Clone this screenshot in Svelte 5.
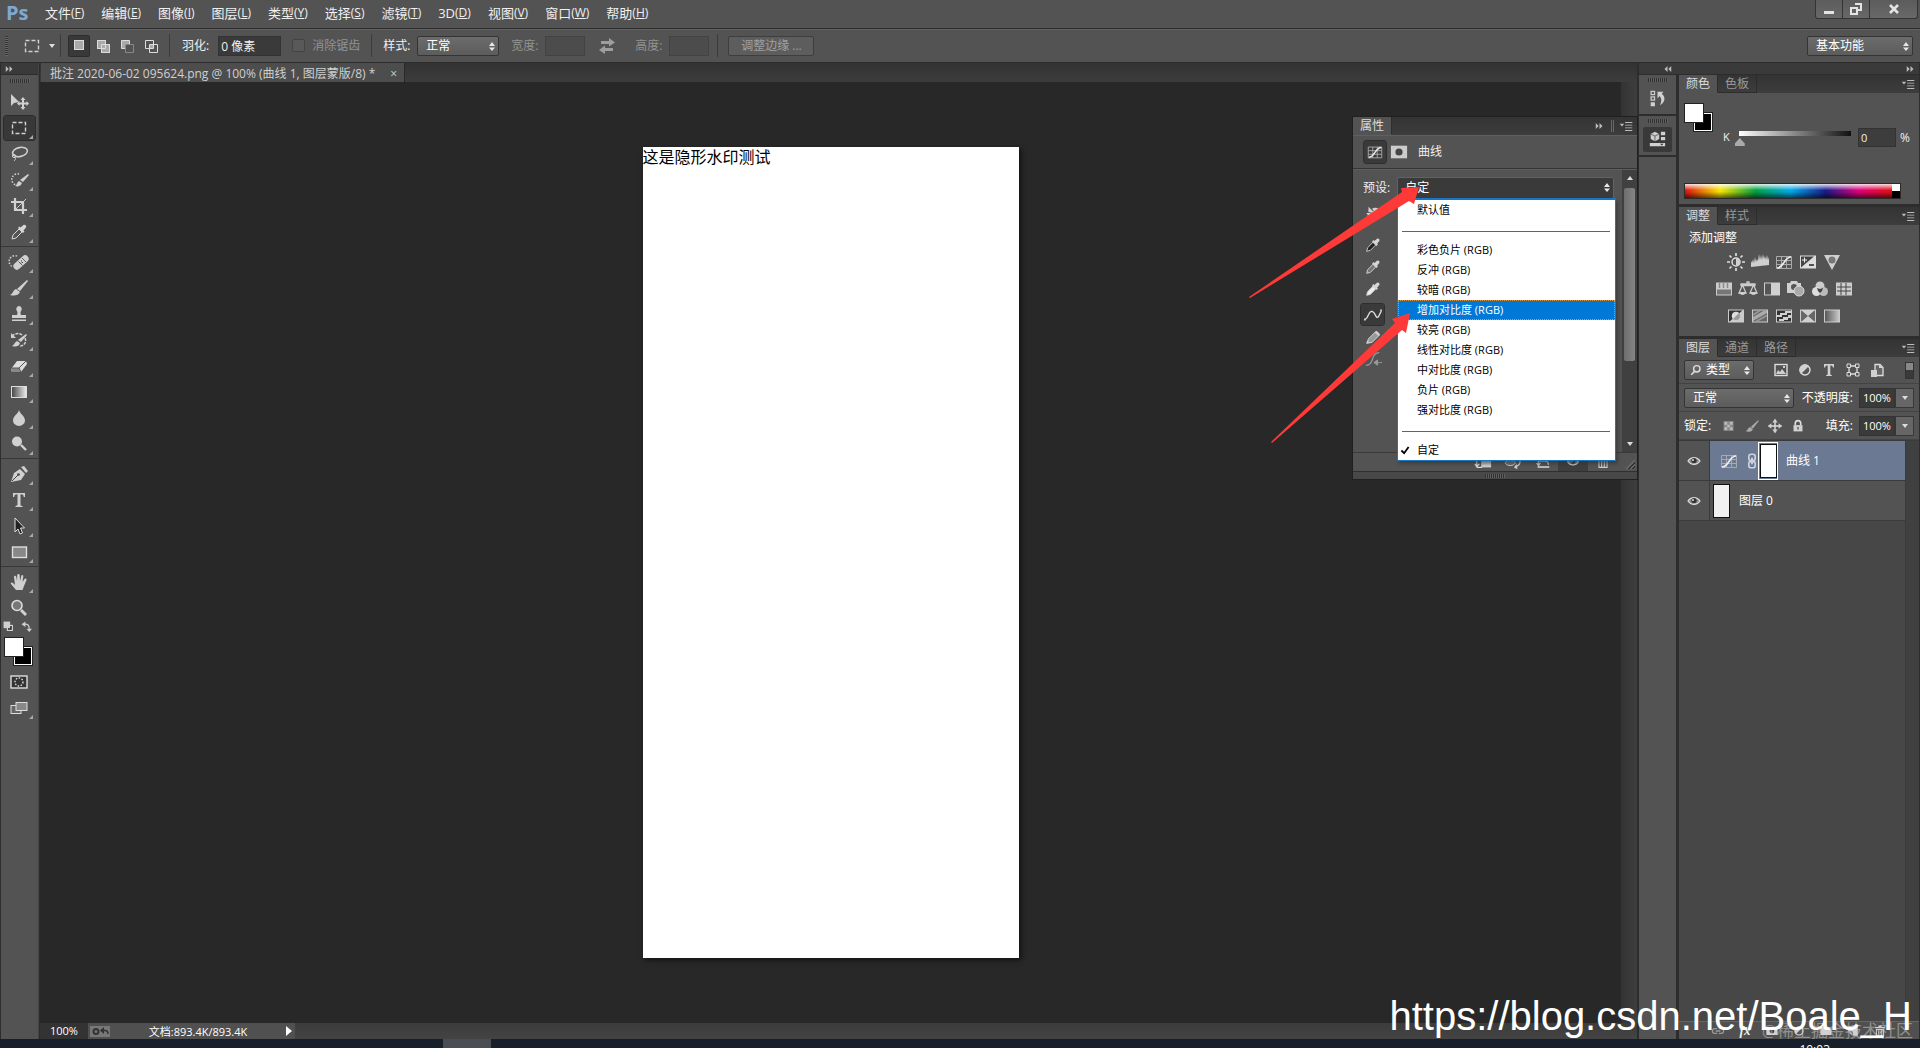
<script>
  const menus = [
    ['文件', 'F'], ['编辑', 'E'], ['图像', 'I'], ['图层', 'L'], ['类型', 'Y'], ['选择', 'S'],
    ['滤镜', 'T'], ['3D', 'D'], ['视图', 'V'], ['窗口', 'W'], ['帮助', 'H'],
  ];

  const toolGroups = [
    [
      { id: 'move', label: '移动工具', plain: true },
      { id: 'marquee', label: '矩形选框工具' },
      { id: 'lasso', label: '套索工具' },
      { id: 'quick', label: '快速选择工具' },
      { id: 'crop', label: '裁剪工具' },
      { id: 'dropper', label: '吸管工具' },
    ],
    [
      { id: 'heal', label: '修复画笔工具' },
      { id: 'brush', label: '画笔工具' },
      { id: 'stamp', label: '仿制图章工具' },
      { id: 'history', label: '历史记录画笔工具' },
      { id: 'eraser', label: '橡皮擦工具' },
      { id: 'gradient', label: '渐变工具' },
      { id: 'blur', label: '模糊工具' },
      { id: 'dodge', label: '减淡工具' },
    ],
    [
      { id: 'pen', label: '钢笔工具' },
      { id: 'type', label: '文字工具' },
      { id: 'arrow', label: '路径选择工具' },
      { id: 'rect', label: '矩形工具' },
    ],
    [
      { id: 'hand', label: '抓手工具' },
      { id: 'zoom', label: '缩放工具', plain: true },
    ],
  ];

  const presets = [
    ['默认值'],
    ['彩色负片 (RGB)', '反冲 (RGB)', '较暗 (RGB)', '增加对比度 (RGB)', '较亮 (RGB)', '线性对比度 (RGB)', '中对比度 (RGB)', '负片 (RGB)', '强对比度 (RGB)'],
    ['自定'],
  ];

  const curveTools = [
    { id: 'scrub', label: '在图像上单击并拖动可修改曲线', tall: true },
    { id: 'dropBlack', label: '设置黑场' },
    { id: 'dropGray', label: '设置灰场' },
    { id: 'dropWhite', label: '设置白场' },
    { id: 'points', label: '编辑点以修改曲线', spaced: true },
    { id: 'pencil', label: '通过绘制来修改曲线' },
    { id: 'smooth', label: '平滑曲线值' },
  ];

  const adjustments = [
    ['sun', 'levels', 'curves', 'exposure', 'vibrance'],
    ['hue', 'balance', 'bw', 'photo', 'mixer', 'lookup'],
    ['invert', 'poster', 'threshold', 'selective', 'gradmap'],
  ];

  const filters = ['image', 'halfcircle', 'typeSmall', 'shape', 'smart'];
  const locks = ['checker', 'brushSmall', 'moveCross', 'padlock'];
  const layerActions = ['link', 'fx', 'mask', 'halfcircle', 'folder', 'newLayer', 'trash'];

  const dropperShape = '<path d="M3 17l1-4 6-6 3 3-6 6z" fill="FILL" stroke="#d6d6d6"/><path d="M9 6l5 5 1.500-1.500-1-1 2.500-3c1-1.500-1-3.500-2.500-2.500l-3 2.500-1-1z" fill="#d6d6d6"/>';
  const brushShape = '<path d="M18 2l1 1-8 10-3-2z"/><path d="M7 11l4 3c-2 4-6 4-10 3 3-1 3-5 6-6z"/>';
  const curvesShape = '<path d="M2.500 4.500h15v12h-15zM2.500 8.500h15M2.500 12.500h15M7.500 4.500v12M12.500 4.500v12" fill="none" stroke="#aaa"/><path d="M3 16c7 0 7-11 14-11" fill="none" stroke="#eee" stroke-width="1.600"/>';

  const icons = {
    move: '<path d="M2 2v12l3-3 5-1z"/><path d="M14 5l2.500 3H15v2.500h2.500V9l2.500 2.500-2.500 2.500v-1.500H15V15h1.500L14 18l-2.500-3H13v-2.500h-2.500V14L8 11.500 10.500 9v1.500H13V8h-1.500z"/>',
    marquee: '<rect x="3.500" y="4.500" width="13" height="11" fill="none" stroke="currentColor" stroke-width="1.400" stroke-dasharray="4 2"/>',
    lasso: '<ellipse cx="11" cy="8" rx="7.500" ry="4.500" fill="none" stroke="currentColor" stroke-width="1.600" transform="rotate(-12 11 8)"/><circle cx="5" cy="12" r="1.600" fill="none" stroke="currentColor"/><path d="M6 13c1 2 0 3-1 4" fill="none" stroke="currentColor"/>',
    quick: '<path d="M10 4a5.500 5.500 0 1 0-3 11" fill="none" stroke="currentColor" stroke-width="1.500" stroke-dasharray="1.500 1.500"/><path d="M19 4l1 1-6 7-3-2z"/><path d="M10 11l3 2c-1 3-4 4-7 3 2-1 2-4 4-5z"/>',
    crop: '<path d="M6 2v12h12M2 6h12v12" fill="none" stroke="currentColor" stroke-width="2.200"/><path d="M7 13l10-10" stroke="currentColor"/>',
    dropper: dropperShape.replace('FILL', '#555'),
    dropBlack: dropperShape.replace('FILL', '#222'),
    dropGray: dropperShape.replace('FILL', '#777'),
    dropWhite: dropperShape.replace('FILL', '#eee'),
    heal: '<path d="M8 4a5.500 5.500 0 1 0-4 11" fill="none" stroke="currentColor" stroke-width="1.500" stroke-dasharray="1.500 1.500"/><rect x="3" y="7" width="18" height="7" rx="3.500" transform="rotate(-42 12 10.500)"/><path d="M9.500 9.500l4 4M13 6l4 4" stroke="#666"/><path d="M12 9h1M13 10.500h1M11.500 11h1" stroke="#444"/>',
    brush: brushShape,
    brushSmall: '<g transform="translate(2 2) scale(.82)" fill="#aaa">' + brushShape + '</g>',
    stamp: '<path d="M10 2a3 3 0 0 1 2 5c-.800 1-.500 3 0 4h5v3H3v-3h5c.500-1 .800-3 0-4a3 3 0 0 1 2-5z"/><path d="M3 15.500h14v1.500H3z"/>',
    history: '<path d="M17 4l1 1-6 7-3-2z"/><path d="M8 11l3 2c-1 4-5 4-8 3 2-1 3-4 5-5z"/><path d="M3 6c3-3 8-3 10-1M16 8c2 4-1 8-5 8" fill="none" stroke="currentColor" stroke-width="1.500" stroke-dasharray="3 1"/><path d="M2 3v5h5z"/>',
    eraser: '<path d="M8 5h9l1 3-6 8H3l-1-3z" fill="#ddd"/><path d="M2 12h8l2 4H3z" fill="#888"/><path d="M2 12h8l7-7M10 12l2 4" stroke="#555" fill="none"/>',
    gradient: '<rect x="2.500" y="4.500" width="15" height="11" fill="url(#fade)" stroke="#ddd"/>',
    blur: '<path d="M10 2c1 4 6 6 6 10.500a5.500 5 0 0 1-12 0C4 8 9 6 10 2z"/>',
    dodge: '<circle cx="8" cy="7.500" r="5"/><path d="M12 11l5 5" stroke="currentColor" stroke-width="2.400"/>',
    pen: '<path d="M2 18l3-9 6-4 5 5-4 6z"/><path d="M12 3l3-1 4 5-2 2z"/><path d="M3 17l6-6" stroke="#444"/><circle cx="9.500" cy="10.500" r="1.300" fill="#444"/>',
    type: '<path d="M4 3h12v4h-1.300c0-2-.800-2.700-3.200-2.700v10.200c0 1.200.500 1.400 2 1.400V17h-7v-1.100c1.500 0 2-.200 2-1.400V4.300C6.100 4.300 5.300 5 5.300 7H4z"/>',
    typeSmall: '<path d="M5 4h10v3.500h-1.200c0-1.600-.500-2.100-2.500-2.100v8.400c0 1 .400 1.200 1.500 1.200v1H7.200v-1c1.100 0 1.500-.200 1.500-1.200V5.400c-2 0-2.500.500-2.500 2.100H5z"/>',
    arrow: '<path d="M6 2v14l3-3 2 5 2.500-1-2-5h4z" fill="#222" stroke="#ddd"/>',
    rect: '<rect x="3.500" y="5" width="14" height="10.500" fill="#888" stroke="#ddd" stroke-width="1.400"/>',
    hand: '<path d="M7 18l-5-6c-1-1.500 1-2 2-1l2 2-1-8c0-1.600 2-1.600 2.300 0L8 9l.300-6c0-1.500 2.200-1.500 2.400 0L11 9l1.300-5c.400-1.500 2.200-1 2 .500L13.500 10l2-3c1-1.200 2.400-.300 2 1L15 14l-1.500 4z"/>',
    zoom: '<circle cx="8" cy="7.500" r="5" fill="#777" stroke="#ddd" stroke-width="1.600"/><path d="M12 12l5 5" stroke="currentColor" stroke-width="3"/>',
    defaults: '<rect x="8" y="8" width="9" height="9" fill="#333" stroke="#ddd" stroke-width="2"/><rect x="1" y="1" width="12" height="12"/>',
    swap: '<path d="M6 6c6-1 9 2 9 8" fill="none" stroke="currentColor" stroke-width="2.400"/><path d="M1 6l7-5v10zM15 20l-5-6h10z"/>',
    quickmask: '<rect x="2" y="4" width="16" height="12" fill="#333" stroke="#ddd" stroke-width="1.400"/><circle cx="10" cy="10" r="4" fill="none" stroke="#ddd" stroke-width="1.400" stroke-dasharray="1.500 1.500"/>',
    screen: '<rect x="2" y="7.500" width="10" height="8" fill="#666" stroke="#ddd"/><rect x="7" y="4.500" width="11" height="8" fill="#888" stroke="#ddd"/>',
    selNew: '<rect x="5.500" y="4.500" width="9" height="9" fill="#aaa" stroke="#ddd"/>',
    selAdd: '<path d="M4 4h9v4h4v9H8v-4H4z"/><path d="M4.500 4.500h8v8h-8zM8.500 8.500h8v8h-8z" fill="#aaa" stroke="#ddd"/>',
    selSub: '<path d="M4.500 4.500h8v4h-4v4h-4z" fill="#aaa" stroke="#ddd"/><path d="M8.500 8.500h8v8h-8z" fill="none" stroke="#888"/>',
    selCross: '<path d="M4.500 4.500h8v8h-8zM8.500 8.500h8v8h-8z" fill="none" stroke="#ddd"/><rect x="9" y="9" width="3" height="3" fill="#aaa"/>',
    exchange: '<path d="M4 5h8V2l6 4.500-6 4V8H4zM16 12H8V9.500L2 14l6 4v-3h8z"/>',
    scrub: '<path d="M5 3v5h5zM3 10h4v1.500H3z"/><path d="M9 5c4-2 9 0 9 4 0 3-2 5-4 5l-5 4-2-2 3-2-6-1v-2l6-1-5-1v-2l6 1z"/>',
    curves: curvesShape,
    points: '<path d="M1 15c4-1 4-10 8-9s4 9 7 6l3-6" fill="none" stroke="#e0e0e0" stroke-width="1.400"/><path d="M0 14h2v2H0zM18 4h2v2h-2z"/>',
    pencil: '<path d="M3 17l2-5 8-8 4 4-8 8z" fill="#999" stroke="#ddd"/><path d="M3 17l1-3 2 2zM12 5l2-2 4 4-2 2z"/>',
    smooth: '<path d="M2 17c10 0 5-14 15-14M3 6h5" fill="none" stroke="#999" stroke-width="1.400"/><path d="M11 14h9M11 14l4-3v6z" fill="#999" stroke="#999"/>',
    maskProp: '<rect x="1" y="3" width="18" height="14" fill="#ccc"/><circle cx="10" cy="10" r="4" fill="#444"/>',
    sun: '<circle cx="10" cy="10" r="4" fill="none" stroke="#ddd" stroke-width="1.500"/><path d="M10 6a4 4 0 0 1 0 8z"/><path d="M10 1v3M10 16v3M1 10h3M16 10h3M3.500 3.500l2 2M14.500 14.500l2 2M3.500 16.500l2-2M14.500 5.500l2-2" stroke="#ddd" stroke-width="1.700"/>',
    levels: '<path d="M1 15V9l1 2 1-4 1 4 1-6 1 5 1-3 1 2 1-7 1 6 1-5 1 5 1-6 1 5 1-3 1 4 1-5 1 5 1-3v8z"/>',
    exposure: '<rect x="2" y="3.500" width="16" height="13" fill="#ddd"/><path d="M3 4.500h13L3 15.500z" fill="#444"/><path d="M4 8h5M6.500 5.500v5" stroke="#eee"/><path d="M11 13h5" stroke="#222" stroke-width="1.500"/>',
    vibrance: '<path d="M2 3h16l-8 15z"/><circle cx="10" cy="8" r="3.500" fill="#777"/>',
    hue: '<rect x="2" y="3.500" width="16" height="13" fill="#ccc"/><path d="M3 10.500h14v5H3z" fill="#777"/><path d="M5.500 4v5M9.500 4v5M13.500 4v5" stroke="#888" stroke-width="1.500"/>',
    balance: '<path d="M9 3h2v3H9zM3 5h14v1.500H3zM1 14l3.500-8L8 14zM12 14l3.500-8L19 14z" fill="none" stroke="#ccc" stroke-width="1.300"/><path d="M1 13h7c-1 4-6 4-7 0zM12 13h7c-1 4-6 4-7 0z"/>',
    bw: '<rect x="2.500" y="4" width="15" height="12" fill="#555" stroke="#ccc"/><path d="M9 4h9v12H9z"/>',
    photo: '<path d="M1 4h3l1-2h6l1 2h3v10H1z"/><circle cx="8" cy="8" r="3" fill="#555"/><circle cx="13" cy="12" r="5" fill="#aaa" stroke="#ddd"/>',
    mixer: '<circle cx="10" cy="7" r="4.500" fill="#ccc"/><circle cx="6.500" cy="12.500" r="4.500" fill="#ddd"/><circle cx="13.500" cy="12.500" r="4.500" fill="#bbb"/><path d="M7 9l3 1 3-1-1 3-2 2-2-2z" fill="#444"/>',
    lookup: '<rect x="2" y="3.500" width="16" height="13" fill="#ccc"/><path d="M3 8h14M3 12h14M7 4v12M12 4v12" stroke="#444"/>',
    invert: '<rect x="2.500" y="4" width="15" height="12" fill="#333" stroke="#ccc"/><path d="M17 4v12H3z" fill="#ccc"/><circle cx="10" cy="10" r="4" fill="#999"/><path d="M7 13a4 4 0 0 1 6-6z" fill="#ddd"/>',
    poster: '<rect x="2.500" y="4" width="15" height="12" fill="#666" stroke="#ccc"/><path d="M3 11L14 4.500h3V7L3 15z" fill="#aaa"/><path d="M3 9l7-4.500M6 15.500l11-6" stroke="#999" stroke-width="1.500"/>',
    threshold: '<rect x="2.500" y="4" width="15" height="12" fill="#333" stroke="#ccc"/><path d="M3 9h3V7h5V5h6v2h-4v2H8v2H3zM5 15v-2h4v-2h5V9h3v3h-3v2h-4v1z"/>',
    selective: '<rect x="2.500" y="4" width="15" height="12" fill="#666" stroke="#ccc"/><path d="M3 4l7 6 7-6zM3 16l7-6 7 6z"/>',
    gradmap: '<rect x="2.500" y="4" width="15" height="12" fill="url(#fadeRev)" stroke="#ccc"/>',
    image: '<rect x="4" y="4.500" width="12" height="11" fill="none" stroke="#ddd" stroke-width="1.400"/><path d="M5 14l2-4 2 2 2-3 4 5zM12 6h2v2h-2z"/>',
    halfcircle: '<circle cx="10" cy="10" r="5" fill="#555" stroke="#ddd" stroke-width="1.400"/><path d="M6 14a5 5 0 0 1 8-8z"/>',
    shape: '<path d="M6 6h8v8H6z" fill="none" stroke="#ddd" stroke-width="1.300"/><path d="M4 4h3.500v3.500H4zM12.500 4H16v3.500h-3.500zM4 12.500h3.500V16H4zM12.500 12.500H16V16h-3.500z" fill="#555" stroke="#ddd"/>',
    smart: '<path d="M8 4.500h5l3 3v8H8z" fill="#666" stroke="#ddd" stroke-width="1.300"/><path d="M12 4v4h4M4 10h6v7H4z"/>',
    checker: '<rect x="4" y="4.500" width="11" height="11" fill="#888"/><path d="M5 5.500h3v3H5zM11 5.500h3v3h-3zM8 8.500h3v3H8zM5 11.500h3v3H5zM11 11.500h3v3h-3z" fill="#bbb"/>',
    moveCross: '<path d="M10 3v14M3 10h14" stroke="#ddd" stroke-width="1.600"/><path d="M10 2l3 4H7zM10 18l3-4H7zM2 10l4-3v6zM18 10l-4-3v6z"/>',
    padlock: '<path d="M5 9h10v7H5z"/><path d="M7 9V7a3 3 0 0 1 6 0v2" fill="none" stroke="#ddd" stroke-width="1.800"/><path d="M10 11v3" stroke="#555" stroke-width="1.500"/>',
    eye: '<path d="M4 10c3-4.500 9-4.500 12 0-3 4.500-9 4.500-12 0z" fill="#888" stroke="#ddd" stroke-width="1.300"/><circle cx="10" cy="9.500" r="2.600" fill="#333"/><circle cx="9" cy="9" r="1" fill="#ddd"/>',
    chain: '<rect x="6" y="1.500" width="8" height="8" rx="3" fill="none" stroke="#ccd3df" stroke-width="2"/><rect x="6" y="10.500" width="8" height="8" rx="3" fill="none" stroke="#ccd3df" stroke-width="2"/><path d="M10 6v8" stroke="#ccd3df" stroke-width="2.400"/>',
    link: '<path d="M9 7H6a3 3 0 0 0 0 6h3M11 7h3a3 3 0 0 1 0 6h-3M7 10h6" fill="none" stroke="#999" stroke-width="1.600"/>',
    mask: '<rect x="3" y="5" width="14" height="10"/><circle cx="10" cy="10" r="3" fill="#444"/>',
    folder: '<path d="M3 5h5l2 2h7v8H3z"/>',
    newLayer: '<path d="M4 4h12v12H9l-5-5z"/><path d="M4 11h5v5" fill="none" stroke="#444"/>',
    trash: '<path d="M4 5h12v1.500H4zM8 3h4v2H8z"/><path d="M5.500 8h9v8h-9zM8.500 8v8M11.500 8v8" fill="none" stroke="#ccc" stroke-width="1.300"/>',
    clip: '<path d="M8 7h11v9H8z"/><path d="M3 6v9M1 12l2 3 3-3M3 16h6" fill="none" stroke="#ddd" stroke-width="1.500"/>',
    viewPrev: '<path d="M1 11c3-4 9-4 12 0-3 4-9 4-12 0z" fill="#777" stroke="#ddd"/><path d="M18 8c0 4-1 6-5 7" fill="none" stroke="#ddd" stroke-width="1.500"/><path d="M14 12l-3 4 4 2z"/>',
    reset: '<path d="M5 13V9h7c3 0 4 2 4 4M4 15.500h13" fill="none" stroke="#ddd" stroke-width="1.500"/><path d="M2 11h6l-3 4z"/>',
    historyPanel: '<path d="M2.500 1.500h4v4h-4zM2.500 8h4v4h-4z" fill="none" stroke="#ccc" stroke-width="1.500"/><path d="M2 14.500h5V19H2zM10 2h7l-2 2.500c5 4 4 10-2 13.500 2-5 2-8-.500-11L10 10z"/>',
    propsPanel: '<path d="M7 1l5 2.500v6L7 12 2 9.500v-6z" fill="#ccc"/><path d="M2 3.500L7 6l5-2.500M7 6v6" stroke="#555" fill="none"/><path d="M14 1h5v4h-5zM14 7h5v4h-5zM1 14h18v4H1z"/><path d="M13 15h4l-2 2z" fill="#333"/>',
    search: '<circle cx="11" cy="8.500" r="4" fill="none" stroke="#ddd" stroke-width="1.800"/><path d="M8 12l-4 4" stroke="#ddd" stroke-width="2"/>',
    sync: '<rect x="0" y="5" width="20" height="11" fill="#777"/><circle cx="6" cy="10.500" r="2.500" fill="none" stroke="#333" stroke-width="2"/><path d="M11 9.500h4c2 0 3 1 3 3.500" stroke="#333" fill="none" stroke-width="1.500"/><path d="M14 6v7l-4-3.500z" fill="#333"/>',
  };

  let tool = $state('marquee');
  let curveTool = $state('points');
  let preset = $state('自定');
  let hovered = $state('增加对比度 (RGB)');
  let layer = $state('曲线 1');
</script>

{#snippet icon(name)}
  <svg class="icon" viewBox="0 0 20 20" aria-hidden="true">{@html icons[name]}</svg>
{/snippet}

{#snippet dbl(left)}
  <svg class="dbl" class:left viewBox="0 0 10 8" aria-hidden="true"><path d="M0 0l4 4-4 4zM5 0l4 4-4 4z" /></svg>
{/snippet}

{#snippet panelMenu()}
  <button class="panel-menu" aria-label="面板菜单">
    <svg viewBox="0 0 14 10" aria-hidden="true"><path d="M0 2h5L2.500 5zM6 0h8v1H6zM6 3h8v1H6zM6 6h8v1H6zM6 9h8v1H6z" /></svg>
  </button>
{/snippet}

{#snippet tabs(names)}
  <div class="tabs">
    {#each names as name, i}
      <button class="tab" class:active={i === 0}>{name}</button>
    {/each}
    <span class="spring"></span>
    {@render panelMenu()}
  </div>
{/snippet}

{#snippet picker(label, options)}
  <span class="picker">
    <select aria-label={label}>
      {#each options as o}<option>{o}</option>{/each}
    </select>
    <svg viewBox="0 0 6 9" aria-hidden="true"><path d="M0 4l3-4 3 4zM0 5.500h6L3 9z" /></svg>
  </span>
{/snippet}

<svg class="defs" aria-hidden="true">
  <defs>
    <linearGradient id="fade"><stop stop-color="#444" /><stop offset="1" stop-color="#eee" /></linearGradient>
    <linearGradient id="fadeRev"><stop stop-color="#555" /><stop offset="1" stop-color="#ccc" /></linearGradient>
  </defs>
</svg>

<div class="app">
  <header class="menubar">
    <span class="logo">Ps</span>
    <nav>
      {#each menus as [name, key]}
        <button>{name}<small>(<u>{key}</u>)</small></button>
      {/each}
    </nav>
    <div class="window-buttons">
      <button aria-label="最小化"><svg viewBox="0 0 12 12"><path d="M1 8h10v3H1z" /></svg></button>
      <button aria-label="还原"><svg viewBox="0 0 12 12"><path d="M5 1h6v6H8M1 5h6v6H1z" fill="none" stroke="#e4e4e4" stroke-width="2" /></svg></button>
      <button class="wide" aria-label="关闭"><svg viewBox="0 0 12 12"><path d="M2 2l8 8M10 2l-8 8" stroke="#e4e4e4" stroke-width="2.500" /></svg></button>
    </div>
  </header>

  <div class="options">
    <span class="grip-v"></span>
    <button class="current-tool" aria-label="工具预设">{@render icon('marquee')}<i class="down"></i></button>
    <span class="sep"></span>
    <div class="modes">
      {#each ['selNew', 'selAdd', 'selSub', 'selCross'] as mode, i}
        <button class:active={i === 0} aria-label={mode}>{@render icon(mode)}</button>
      {/each}
    </div>
    <span class="sep"></span>
    <label class="feather">羽化: <input value="0 像素" /></label>
    <label class="check dim"><input type="checkbox" disabled />消除锯齿</label>
    <span class="sep"></span>
    <div class="field style-field"><span>样式:</span>{@render picker('样式', ['正常', '固定比例', '固定大小'])}</div>
    <label class="field dim">宽度: <input disabled /></label>
    <button class="exchange" aria-label="高度和宽度互换">{@render icon('exchange')}</button>
    <label class="field dim">高度: <input disabled /></label>
    <span class="sep"></span>
    <button class="refine">调整边缘 ...</button>
    <span class="spring"></span>
    <div class="workspace-picker">{@render picker('工作区', ['基本功能'])}</div>
  </div>

  <div class="workspace">
    <aside class="toolbox">
      <div class="dock-head">{@render dbl(false)}</div>
      <div class="grip"></div>
      {#each toolGroups as group}
        <div class="tool-group">
          {#each group as t}
            <button class="tool" class:active={tool === t.id} title={t.label} aria-label={t.label} onclick={() => (tool = t.id)}>
              {@render icon(t.id)}
              {#if !t.plain}<i class="corner"></i>{/if}
            </button>
          {/each}
        </div>
      {/each}
      <div class="swatch-tools">
        <button aria-label="默认颜色">{@render icon('defaults')}</button>
        <button aria-label="切换颜色">{@render icon('swap')}</button>
      </div>
      <div class="swatches"><button class="back" aria-label="背景色"></button><button class="front" aria-label="前景色"></button></div>
      <button class="tool" aria-label="快速蒙版">{@render icon('quickmask')}</button>
      <button class="tool" aria-label="屏幕模式">{@render icon('screen')}<i class="corner"></i></button>
    </aside>

    <main class="editor">
      <div class="doc-tabs">
        <div class="doc-tab">
          <span>批注 2020-06-02 095624.png @ 100% (曲线 1, 图层蒙版/8) *</span>
          <button aria-label="关闭文档">×</button>
        </div>
      </div>
      <div class="stage">
        <div class="canvas"><div class="page">这是隐形水印测试</div></div>
        <div class="stage-scroll"></div>
      </div>
      <div class="status">
        <span class="percent">100%</span>
        <div class="doc-info">
          {@render icon('sync')}
          <span>文档:893.4K/893.4K</span>
          <button aria-label="状态选项"></button>
        </div>
      </div>

      <section class="props">
        <div class="tabs">
          <button class="tab active">属性</button>
          <span class="spring"></span>
          {@render dbl(false)}
          <span class="bars"></span>
          {@render panelMenu()}
        </div>
        <div class="props-title">
          <button class="active" aria-label="曲线">{@render icon('curves')}</button>
          <button aria-label="蒙版">{@render icon('maskProp')}</button>
          <span>曲线</span>
        </div>
        <div class="props-body">
          <div class="props-main">
            <div class="preset-row"><span>预设:</span>{@render picker('预设', ['自定'])}</div>
            <div class="curve-tools">
              {#each curveTools as t}
                <button class:tall={t.tall} class:spaced={t.spaced} class:active={curveTool === t.id} title={t.label} aria-label={t.label} onclick={() => (curveTool = t.id)}>
                  {@render icon(t.id)}
                </button>
              {/each}
            </div>
          </div>
          <div class="scroll"><i class="up"></i><span class="thumb"></span><i class="down"></i></div>
        </div>
        <div class="props-foot">
          {#each ['clip', 'viewPrev', 'reset', 'eye', 'trash'] as a}
            <button class:active={a === 'eye'} aria-label={a}>{@render icon(a)}</button>
          {/each}
          <span class="resize"></span>
        </div>
        <div class="props-grip"><span class="grip"></span></div>

        <div class="preset-menu" role="listbox" aria-label="预设">
          {#each presets as group}
            <div class="preset-group">
              {#each group as p}
                <button role="option" aria-selected={preset === p} class:hovered={hovered === p} onmouseenter={() => (hovered = p)} onclick={() => (preset = p)}>
                  {#if preset === p}
                    <svg viewBox="0 0 10 10" aria-hidden="true"><path d="M1 5l3 3 5-7" fill="none" stroke="#000" stroke-width="2" /></svg>
                  {/if}
                  {p}
                </button>
              {/each}
            </div>
          {/each}
        </div>

        <svg class="arrows" viewBox="0 0 284 363" aria-hidden="true">
          <path d="M-104 180L49 75 48 71 66 70 61 87 56 84-103 181z" />
          <path d="M-82 325L42 206 39 202 57 196 53 216 49 213-81 326z" />
        </svg>
      </section>
    </main>

    <div class="dock">
      <div class="dock-icons">
        <div class="dock-head end">{@render dbl(true)}</div>
        <div class="icon-group"><div class="grip"></div><button aria-label="历史记录">{@render icon('historyPanel')}</button></div>
        <div class="icon-group"><div class="grip"></div><button class="active" aria-label="属性">{@render icon('propsPanel')}</button></div>
        <div class="fill"></div>
      </div>

      <div class="panels">
        <div class="dock-head end">{@render dbl(false)}</div>

        <section class="panel">
          {@render tabs(['颜色', '色板'])}
          <div class="color-body">
            <div class="color-row">
              <div class="swatches"><button class="back" aria-label="背景色"></button><button class="front" aria-label="前景色"></button></div>
              <label class="k-slider">K <input type="range" min="0" max="100" value="0" /></label>
              <label class="k-value"><input value="0" aria-label="K 值" />%</label>
            </div>
            <div class="spectrum"><span class="hues"></span><span class="ends"></span></div>
          </div>
        </section>

        <section class="panel">
          {@render tabs(['调整', '样式'])}
          <div class="adjust-body">
            <p>添加调整</p>
            {#each adjustments as row}
              <div class="adjust-row">
                {#each row as a}<button aria-label={a}>{@render icon(a)}</button>{/each}
              </div>
            {/each}
          </div>
        </section>

        <section class="panel layers">
          {@render tabs(['图层', '通道', '路径'])}
          <div class="layer-row filter-row">
            <div class="kind">{@render icon('search')}{@render picker('类型', ['类型'])}</div>
            <div class="filters">
              {#each filters as f}<button aria-label={f}>{@render icon(f)}</button>{/each}
            </div>
            <button class="switch" aria-label="打开或关闭图层过滤"></button>
          </div>
          <div class="layer-row">
            <div class="blend">{@render picker('混合模式', ['正常'])}</div>
            <label class="amount">不透明度: <input value="100%" /></label>
            <button class="drop" aria-label="不透明度"><i class="down"></i></button>
          </div>
          <div class="layer-row">
            <span class="lock-label">锁定:</span>
            <div class="locks">
              {#each locks as l}<button aria-label={l}>{@render icon(l)}</button>{/each}
            </div>
            <label class="amount">填充: <input value="100%" /></label>
            <button class="drop" aria-label="填充"><i class="down"></i></button>
          </div>
          <div class="layer-list">
            <div class="layer-items">
              <div class="layer" class:active={layer === '曲线 1'}>
                <button class="eye" aria-label="指示图层可见性">{@render icon('eye')}</button>
                <button class="layer-name adj" onclick={() => (layer = '曲线 1')}>
                  {@render icon('curves')}{@render icon('chain')}<span class="mask-frame"><span class="thumbnail"></span></span>曲线 1
                </button>
              </div>
              <div class="layer" class:active={layer === '图层 0'}>
                <button class="eye" aria-label="指示图层可见性">{@render icon('eye')}</button>
                <button class="layer-name" onclick={() => (layer = '图层 0')}><span class="thumbnail gray"></span>图层 0</button>
              </div>
            </div>
            <div class="layer-scroll"></div>
          </div>
          <div class="layer-foot">
            {#each layerActions as a}
              <button aria-label={a}>{#if a === 'fx'}<em>fx</em>{:else}{@render icon(a)}{/if}</button>
            {/each}
          </div>
        </section>
      </div>
    </div>
  </div>

  <footer class="taskbar"><span class="task"></span><span class="clock">10:03</span></footer>

  <div class="credit">@稀土掘金技术社区</div>
  <div class="watermark">https://blog.csdn.net/Boale_H</div>
</div>

<style>
  :global(body) { background: #282828; }
  .app {
    --line: #2d2d2d;
    --face: #535353;
    position: relative;
    display: flex; flex-direction: column;
    height: 100vh;
    overflow: hidden;
    background: var(--line);
    color: #f0f0f0;
    font: 12px/16px "Open Sans", "Noto Sans CJK SC", sans-serif;
  }
  .app *, .app { box-sizing: border-box; }
  .defs { position: absolute; width: 0; height: 0; }
  button, input, select { font: inherit; color: inherit; margin: 0; padding: 0; border: 0; background: none; border-radius: 0; }
  button { display: flex; align-items: center; justify-content: center; white-space: nowrap; }
  .icon { width: 20px; height: 20px; flex: none; fill: #d0d0d0; color: #d0d0d0; display: block; overflow: visible; }
  .spring { flex: 1; }
  i.down { border: 3px solid transparent; border-top: 4px solid #ddd; border-bottom: 0; }
  i.up { border: 3px solid transparent; border-bottom: 4px solid #ddd; border-top: 0; }

  .menubar { display: flex; height: 28px; background: var(--face); padding-left: 6px; flex: none; }
  .logo { width: 31px; font: bold 20px/26px "Open Sans", sans-serif; color: #7fa9d3; }
  nav { display: flex; gap: 1px; }
  nav button { padding: 0 8px 2px; font-size: 13px; }
  nav small { font-size: 12px; }
  .window-buttons { margin: 0 2px 0 auto; display: flex; height: 19px; border: 1px solid #343434; border-top: 0; border-radius: 0 0 3px 3px; background: linear-gradient(#5c5c5c, #686868); }
  .window-buttons button { width: 27px; border-right: 1px solid #343434; }
  .window-buttons .wide { width: 47px; border: 0; }
  .window-buttons svg { width: 12px; height: 12px; fill: #e4e4e4; }

  .options { display: flex; align-items: center; height: 35px; flex: none; background: var(--face); border-top: 1px solid var(--line); border-bottom: 1px solid var(--line); box-shadow: inset 0 1px #626262; padding: 0 7px 0 5px; }
  .grip-v { width: 3px; height: 20px; background: repeating-linear-gradient(#333 0 1px, #686868 1px 2px); }
  .current-tool { margin-left: 14px; gap: 7px; }
  .sep { width: 1px; height: 23px; background: #3b3b3b; margin: 0 12px; }
  .current-tool + .sep { margin: 0 7px 0 5px; }
  .modes { display: flex; gap: 2px; }
  .modes button { width: 22px; height: 22px; border-radius: 2px; border: 1px solid transparent; }
  .modes button.active { background: #393939; border-color: #2d2d2d; }
  .modes + .sep { margin-left: 7px; }
  label { display: flex; align-items: center; gap: 7px; white-space: nowrap; }
  .feather { gap: 9px; }
  .feather input { width: 63px; }
  .options label input:not([type='checkbox']) { height: 20px; background: #3a3a3a; border: 1px solid #333; padding: 0 2px; }
  .options .dim { color: #929292; }
  .options .dim input:not([type='checkbox']) { width: 40px; background: #4c4c4c; border-color: #434343; }
  .check { margin-left: 11px; }
  .check input { appearance: none; width: 13px; height: 13px; border: 1px solid #444; border-radius: 2px; background: #595959; }
  .check + .sep { margin-left: 11px; margin-right: 11px; }
  .field { display: flex; align-items: center; gap: 7px; }
  .style-field { width: 116px; margin-right: 12px; }
  .exchange { margin: 0 18px 0 12px; opacity: 0.6; }
  .field + .sep { margin: 0 10px 0 8px; }
  .refine { width: 86px; height: 20px; border: 1px solid #3e3e3e; border-radius: 2px; background: #5d5d5d; color: #a0a0a0; }
  .workspace-picker { display: flex; width: 106px; }

  .picker { position: relative; display: flex; flex: 1; min-width: 0; }
  .picker select { appearance: none; width: 100%; height: 20px; padding: 0 8px; border: 1px solid #343434; border-radius: 2px; background: linear-gradient(#6c6c6c, #5c5c5c); color: #fff; }
  .picker svg { position: absolute; right: 4px; top: 6px; width: 6px; height: 9px; fill: #e8e8e8; pointer-events: none; }

  .workspace { display: flex; flex: 1; min-height: 0; padding: 0 1px; }
  .dock-head { display: flex; align-items: center; height: 12px; flex: none; padding: 0 4px; background: #3a3a3a; border-bottom: 1px solid var(--line); }
  .dock-head.end { justify-content: flex-end; }
  .dbl { width: 9px; height: 6px; fill: #bbb; }
  .dbl.left { transform: rotate(180deg); }
  .grip { width: 20px; height: 4px; flex: none; background: repeating-linear-gradient(90deg, #303030 0 1px, #606060 1px 2px); }

  .toolbox { width: 38px; flex: none; display: flex; flex-direction: column; align-items: stretch; background: var(--face); border-right: 1px solid #444; }
  .toolbox > .grip { margin: 4px 0 6px 9px; }
  .tool-group { display: flex; flex-direction: column; }
  .tool { position: relative; width: 31px; height: 24px; flex: none; margin: 1px 3px; border-radius: 2px; padding-right: 2px; }
  .tool.active { background: #383838; outline: 1px solid #2c2c2c; }
  .tool .corner { position: absolute; right: 2px; bottom: 1px; border: 2px solid; border-color: transparent #aaa #aaa transparent; }
  .tool-group + .tool-group { border-top: 1px solid #383838; margin-top: 1px; padding-top: 2px; }
  .swatch-tools { display: flex; gap: 7px; padding-left: 2px; }
  .swatch-tools .icon { width: 11px; height: 11px; }
  .swatches { position: relative; width: 29px; height: 29px; flex: none; }
  .toolbox .swatches { margin: 5px 0 3px 3px; }
  .swatches button { position: absolute; width: 18px; height: 18px; border: 1px solid #fff; outline: 1px solid #222; }
  .swatches .front { left: 1px; top: 1px; background: #fff; }
  .swatches .back { right: 1px; bottom: 1px; background: #000; }

  .editor { position: relative; flex: 1; min-width: 0; display: flex; flex-direction: column; margin: 0 2px 0 1px; }
  .doc-tabs { display: flex; height: 19px; background: linear-gradient(#333, #3c3c3c); flex: none; padding-left: 1px; }
  .doc-tab { display: flex; align-items: center; gap: 15px; padding: 2px 7px 0 9px; background: #4d4d4d; color: #d0d0d0; white-space: nowrap; border-right: 1px solid #292929; }
  .stage { flex: 1; min-height: 0; display: flex; background: #282828; }
  .canvas { flex: 1; display: flex; align-items: center; justify-content: center; }
  .page { width: 376px; height: 811px; background: #fff; color: #000; font-size: 16px; line-height: 20px; box-shadow: 2px 2px 5px #111; }
  .stage-scroll { width: 16px; background: linear-gradient(90deg, #333, #3e3e3e); }
  .status { display: flex; height: 16px; flex: none; background: linear-gradient(#3c3c3c, #444); line-height: 15px; color: #fff; }
  .percent { width: 48px; padding-left: 10px; background: #333; font-size: 11px; }
  .doc-info { display: flex; align-items: center; justify-content: space-between; width: 207px; padding: 0 3px 0 2px; background: #505050; font-size: 11px; }
  .doc-info button { border: 5px solid transparent; border-left: 6px solid #fff; border-right: 0; }

  .tabs { display: flex; align-items: stretch; height: 18px; flex: none; background: linear-gradient(#343434, #3d3d3d); }
  .tab { padding: 0 7px; color: #999; border-right: 1px solid #2d2d2d; border-bottom: 1px solid #2d2d2d; line-height: 14px; }
  .tab.active { background: var(--face); color: #ddd; border-bottom-color: var(--face); }
  .panel-menu { margin-right: 4px; }
  .panel-menu svg { width: 14px; height: 9px; fill: #bbb; }
  .bars { width: 3px; margin: 3px 5px; border: 1px solid #686868; border-width: 0 1px; }
  .tabs > .dbl { align-self: center; margin-right: 2px; }

  .props { position: absolute; right: 0; top: 54px; width: 284px; display: flex; flex-direction: column; background: var(--face); box-shadow: 0 0 0 1px #202020; }
  .props-title { display: flex; align-items: center; gap: 2px; height: 34px; padding-left: 11px; border-top: 1px solid #606060; border-bottom: 1px solid #353535; }
  .props-title button { width: 22px; height: 22px; }
  .props-title .active, .curve-tools .active { background: #3a3a3a; outline: 1px solid #2e2e2e; border-radius: 2px; }
  .props-title .icon { width: 18px; height: 18px; }
  .props-title span { margin-left: 6px; }
  .props-body { display: flex; height: 283px; border-top: 1px solid #5e5e5e; }
  .props-main { flex: 1; padding: 7px 8px 0 10px; }
  .preset-row { display: flex; align-items: center; gap: 7px; }
  .preset-row .picker select { height: 22px; background: #3a3a3a; border-color: #2f6cb0; padding: 0 7px; }
  .curve-tools { display: flex; flex-direction: column; align-items: flex-start; gap: 1px; margin-left: -2px; }
  .curve-tools button { width: 23px; height: 21px; }
  .curve-tools .tall { height: 34px; align-items: flex-start; padding-top: 5px; }
  .curve-tools .spaced { margin-top: 4px; }
  .curve-tools .icon { width: 18px; height: 18px; }
  .scroll { width: 15px; display: flex; flex-direction: column; align-items: center; background: #404040; padding: 6px 0; }
  .scroll .thumb { width: 11px; height: 173px; margin: 8px 0 auto; border-radius: 2px; background: linear-gradient(90deg, #6e6e6e, #858585); }
  .props-foot { display: flex; justify-content: flex-end; height: 19px; border-top: 1px solid #3a3a3a; }
  .props-foot button { width: 30px; }
  .props-foot .active { background: #3e3e3e; }
  .props-foot .icon { width: 18px; height: 18px; }
  .resize { width: 10px; height: 10px; margin: 6px 2px 0 7px; background: repeating-linear-gradient(135deg, #333 0 1px, #666 1px 3px); clip-path: polygon(100% 0, 100% 100%, 0 100%); }
  .props-grip { display: flex; justify-content: center; align-items: center; height: 8px; background: #484848; border-top: 1px solid #303030; }
  .preset-menu { position: absolute; left: 44px; top: 81px; width: 219px; background: #fff; border: 1px solid #1976c5; border-top-width: 2px; color: #000; font-size: 11px; box-shadow: 2px 3px 3px #3339; }
  .preset-group + .preset-group { margin-top: 11px; padding-top: 9px; background: linear-gradient(#1976c5, #1976c5) no-repeat 4px 0 / 208px 1px; }
  .preset-menu button { position: relative; width: 100%; height: 20px; justify-content: flex-start; padding-left: 19px; }
  .preset-menu svg { position: absolute; left: 2px; top: 6px; width: 10px; height: 9px; }
  .preset-menu .hovered { background: #0078d7; color: #fff; outline: 1px dotted #d79a4a; outline-offset: -1px; }
  .arrows { position: absolute; left: 0; top: 0; width: 284px; height: 363px; overflow: visible; fill: #fd3a38; pointer-events: none; }

  .dock { display: flex; flex: none; gap: 3px; }
  .dock-icons { width: 37px; display: flex; flex-direction: column; }
  .icon-group { display: flex; flex-direction: column; height: 40px; background: var(--face); border-bottom: 1px solid var(--line); margin-bottom: 1px; }
  .icon-group .grip { margin: 3px 0 4px 9px; }
  .icon-group button { height: 25px; margin: 0 4px; }
  .icon-group .active { background: #393939; border-radius: 2px; }
  .icon-group .icon { width: 17px; height: 17px; }
  .fill { flex: 1; background: var(--face); }
  .panels { width: 240px; display: flex; flex-direction: column; }
  .panels > .dock-head { margin-left: -3px; }
  .panel { background: var(--face); margin-bottom: 3px; }
  .color-body { padding: 10px 18px 5px 5px; height: 111px; display: flex; flex-direction: column; justify-content: space-between; }
  .color-row { display: flex; align-items: flex-start; margin-right: -9px; }
  .k-slider { gap: 9px; margin: 24px 7px 0 10px; font-size: 11px; flex: 1; min-width: 0; }
  .k-slider input { appearance: none; flex: 1; min-width: 0; height: 20px; background: linear-gradient(90deg, #fff, #111) no-repeat 0 4px / 100% 5px; }
  .k-slider input::-webkit-slider-thumb { appearance: none; width: 10px; height: 8px; margin-top: 10px; margin-left: -4px; background: #aaa; clip-path: polygon(50% 0, 100% 70%, 100% 100%, 0 100%, 0 70%); }
  .k-value { gap: 4px; margin-top: 25px; }
  .k-value input { width: 38px; height: 19px; background: #3d3d3d; border: 1px solid #333; padding: 0 2px; font-size: 11px; }
  .spectrum { display: flex; height: 16px; border: 1px solid #2b2b2b; }
  .hues { flex: 1; background: linear-gradient(#fffd, #fff0 45%, #0000 55%, #0009), linear-gradient(90deg, #e01010, #f6e500 17%, #00a040 34%, #00a8e8 51%, #1a1a8a 68%, #e0007a 84%, #e01010); }
  .ends { width: 8px; background: linear-gradient(#fff 50%, #000 50%); }
  .adjust-body { height: 111px; padding: 5px 31px 0 0; }
  .adjust-body p { margin: 0 0 6px 10px; color: #fff; }
  .adjust-row { display: flex; justify-content: center; gap: 4px; margin-bottom: 7px; }
  .adjust-row button { height: 20px; }

  .layers { flex: 1; min-height: 0; margin: 0; display: flex; flex-direction: column; }
  .layer-row { display: flex; align-items: center; height: 28px; flex: none; padding: 0 5px; border-bottom: 1px solid #434343; color: #fff; }
  .filter-row { height: 27px; }
  .kind { position: relative; display: flex; width: 70px; }
  .kind > .icon { position: absolute; left: 4px; top: 2px; width: 16px; height: 16px; z-index: 1; }
  .kind :global(select) { padding-left: 21px; }
  .filters { display: flex; gap: 4px; margin-left: 17px; }
  .switch { width: 9px; height: 17px; margin-left: auto; border: 1px solid #333; background: linear-gradient(#888 45%, #3a3a3a 45%); }
  .blend { width: 110px; display: flex; }
  .amount { margin-left: auto; gap: 6px; }
  .amount input { width: 36px; height: 20px; background: #3a3a3a; border: 1px solid #333; padding: 0 3px; font-size: 11px; }
  .drop { width: 19px; height: 20px; background: #666; border: 1px solid #383838; }
  .locks { display: flex; gap: 3px; margin-left: 8px; }
  .locks .icon { width: 20px; height: 18px; }
  .layer-list { flex: 1; min-height: 0; display: flex; background: #474747; border-top: 1px solid #3a3a3a; }
  .layer-items { flex: 1; }
  .layer-scroll { width: 14px; background: #404040; border-left: 1px solid #3a3a3a; }
  .layer { display: flex; height: 40px; background: var(--face); border-bottom: 1px solid #3b3b3b; }
  .eye { width: 31px; border-right: 1px solid #3b3b3b; }
  .layer-name { flex: 1; justify-content: flex-start; padding-left: 3px; color: #fff; }
  .adj { padding-left: 9px; }
  .adj .icon + .icon { width: 16px; height: 16px; margin: 0 -2px 0 5px; }
  .layer.active .layer-name { background: #6b7a92; }
  .thumbnail { width: 17px; height: 34px; background: #fff; border: 1px solid #111; }
  .gray { background: #f2f2f2; margin-right: 9px; }
  .mask-frame { display: flex; align-items: center; justify-content: center; width: 20px; height: 38px; margin-right: 8px; border: 1px solid #fff; }
  .layer-foot { display: flex; align-items: center; justify-content: center; gap: 7px; height: 18px; background: #505050; border-top: 1px solid #666; }
  .layer-foot button { width: 20px; height: 16px; }
  .layer-foot .icon { width: 16px; height: 16px; }
  .layer-foot em { font: italic bold 13px/14px "Liberation Serif", serif; }

  .taskbar { display: flex; justify-content: space-between; height: 9px; flex: none; overflow: hidden; background: #17202a; padding: 0 90px 0 443px; }
  .task { width: 48px; background: #4a4d53; }
  .clock { padding-top: 3px; font-size: 12px; color: #fff; }
  .credit, .watermark { position: absolute; white-space: nowrap; pointer-events: none; }
  .credit { right: 7px; bottom: 5px; font-size: 17px; line-height: 24px; color: #d0d0d080; }
  .watermark { right: 8px; bottom: 9px; font: 40px/46px "Liberation Sans", Arial, sans-serif; color: #fff; }
</style>
